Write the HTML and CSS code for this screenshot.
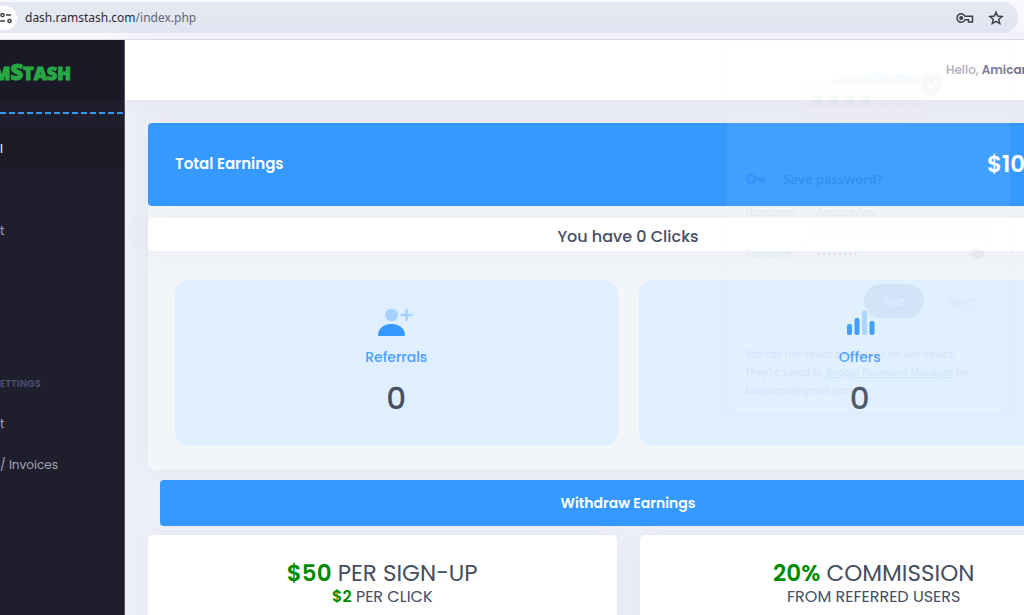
FILE: index.html
```html
<!DOCTYPE html>
<html lang="en">
<head>
<meta charset="utf-8">
<title>RamStash</title>
<link rel="stylesheet" href="styles.css">
</head>
<body>
<header class="browser">
  <div class="omnibox">
    <button class="site-info" aria-label="Site information">
      <svg width="14" height="14" viewBox="0 0 14 14" fill="none" stroke="#3c4043" stroke-width="1.5"><circle cx="2.500" cy="4" r="1.6"/><path d="M6 4h5M0 10h5"/><circle cx="9.500" cy="10" r="1.6"/></svg>
    </button>
    <div class="url">dash.ramstash.com<span class="path">/index.php</span></div>
    <button class="tool" aria-label="Passwords">
      <svg width="18" height="12" viewBox="0 0 18 12" fill="none" stroke="#3f4248" stroke-width="1.5"><path d="M9 4.2A4.200 4.200 0 1 0 9 7.800H12.500V10H16.500V4.200Z"/><circle cx="5.2" cy="6" r="1.3" fill="#3f4248"/></svg>
    </button>
    <button class="tool" aria-label="Bookmark">
      <svg width="16" height="16" viewBox="0 0 16 16" fill="none" stroke="#3f4248" stroke-width="1.5"><path d="M8 2.200l1.700 3.900 4.300.4-3.200 2.800.9 4.200L8 11.400l-3.700 2.100.9-4.200L2 6.500l4.300-.4z"/></svg>
    </button>
  </div>
</header>

<div class="app">
  <aside class="sidebar">
    <div class="brand"><span class="logo"><span class="logo-m">M</span><span class="logo-s">S</span>TASH</span></div>
    <div class="divider"></div>
    <nav class="menu">
      <a class="item active" href="#">l</a>
      <a class="item" href="#" aria-label="Menu entry"></a>
      <a class="item" href="#">t</a>
      <a class="item" href="#" aria-label="Menu entry"></a>
      <a class="item" href="#" aria-label="Menu entry"></a>
      <h4 class="section">ETTINGS</h4>
      <a class="item" href="#">t</a>
      <a class="item" href="#">/ Invoices</a>
    </nav>
  </aside>

  <div class="page">
    <div class="topbar"><div class="greeting">Hello, <b>Amicar</b></div></div>
    <main class="content">
      <section class="panel">
        <div class="earnings"><h3>Total Earnings</h3><span class="amount">$10</span></div>
        <div class="clicks">You have 0 Clicks</div>
        <div class="tiles">
          <div class="tile">
            <svg width="38" height="30" viewBox="0 0 38 30"><circle cx="14.500" cy="7" r="6.3" fill="#a6d2ff"/><path d="M29.500 2v10M24.500 7h10" stroke="#a6d2ff" stroke-width="2.600" stroke-linecap="round"/><path d="M1 27C1.500 20 6.500 16 14.500 16s13 4 13.500 11q0 1-1 1H2q-1 0-1-1z" fill="#3699ff"/></svg>
            <a href="#">Referrals</a>
            <strong>0</strong>
          </div>
          <div class="tile">
            <svg width="36" height="30" viewBox="0 0 36 30"><rect x="5" y="16" width="5" height="11" rx="2" fill="#3699ff"/><rect x="12.500" y="10" width="5" height="17" rx="2" fill="#3699ff"/><rect x="20" y="2.500" width="5" height="24.500" rx="2" fill="#a6d2ff"/><rect x="27.500" y="13" width="5" height="14" rx="2" fill="#3699ff"/></svg>
            <a href="#">Offers</a>
            <strong>0</strong>
          </div>
        </div>
      </section>
      <button class="withdraw">Withdraw Earnings</button>
      <div class="rates">
        <section class="rate"><h2><b>$50</b> PER SIGN-UP</h2><p><b>$2</b> PER CLICK</p></section>
        <section class="rate"><h2><b>20%</b> COMMISSION</h2><p>FROM REFERRED USERS</p></section>
      </div>
    </main>
  </div>
</div>

<form class="popup">
  <svg class="art" width="283" height="100" viewBox="0 0 283 100"><path d="M102 37q18-10 32-4 14-12 28-2 20-9 38 6z" fill="#9ec3f5"/><path d="M74 37h128v32q-58 24-112 0H74z" fill="#fcecf3"/><g fill="#8ba3c8"><circle cx="90" cy="54" r="6"/><circle cx="106" cy="54" r="6"/><circle cx="122" cy="54" r="6"/><circle cx="138" cy="54" r="6"/></g><g fill="none" stroke="#d6b5ca" stroke-width="2"><circle cx="154" cy="54" r="5"/><circle cx="170" cy="54" r="5"/><circle cx="186" cy="54" r="5"/></g><path d="M205 26l10 4v8q0 9-10 13-10-4-10-13v-8z" fill="#7d9dbb"/><path d="M201 38l3 3 6-6" stroke="#fff" stroke-width="2" fill="none"/></svg>
  <h2 class="popup-title"><svg width="22" height="12" viewBox="0 0 22 12" fill="none" stroke="#174ea6" stroke-width="3"><circle cx="6" cy="6" r="4"/><path d="M10 6h11M17 6v4"/></svg>Save password?</h2>
  <div class="field"><label for="user">Username</label><input id="user" type="text" value="Amicareview"></div>
  <div class="field"><label for="pass">Password</label><div class="secret"><input id="pass" type="password" value="password"><svg width="14" height="12" viewBox="0 0 14 12" fill="none" stroke="#222" stroke-width="1.500"><path d="M1 6q6-9 12 0-6 9-12 0z"/><circle cx="7" cy="6" r="2"/></svg></div></div>
  <div class="actions"><button type="button" class="save">Save</button><button type="button" class="never">Never</button></div>
  <p class="note">You can use saved passwords on any device. They’re saved to <a href="#">Google Password Manager</a> for kacounow@gmail.com</p>
</form>
</body>
</html>
```

FILE: styles.css
```css
* { box-sizing: border-box; }
body {
  margin: 0;
  height: 100vh;
  overflow: hidden;
  position: relative;
  display: flex;
  flex-direction: column;
  font-family: Poppins, Inter, sans-serif;
  color: #464e5f;
  background: #eef0f8;
}
h2, h3, h4, p { margin: 0; font-weight: 500; }
button { border: 0; padding: 0; background: none; font: inherit; color: inherit; }
a { color: inherit; text-decoration: none; }
svg { display: block; }

.browser { background: #f8f8ff; border-bottom: 1px solid #dfe1e9; padding: 2px 6px 6px 0; }
.omnibox {
  display: flex;
  align-items: center;
  height: 31px;
  padding-right: 14px;
  background: #e5e7f3;
  border-radius: 0 16px 16px 0;
}
.site-info {
  width: 17px;
  height: 24px;
  display: flex;
  align-items: center;
  border-radius: 0 12px 12px 0;
  background: #fff;
}
.url { flex: 1; margin-left: 8px; font: 12px "Noto Sans", sans-serif; color: #2b2d33; }
.path { color: #64676f; }
.tool { margin-left: 14px; }

.app { flex: 1; display: flex; min-height: 0; margin-right: -108px; }
.sidebar { width: 125px; flex: none; overflow: hidden; background: #1f1e2d; border-right: 1px solid #55545f; }
.brand { height: 60px; display: flex; align-items: center; padding-top: 4px; background: #1a1a26; }
.logo { margin-left: -7px; font: 800 18px/24px "Open Sans", sans-serif; color: #27a844; -webkit-text-stroke: 1px #27a844; white-space: nowrap; }
.logo-s { font-size: 22px; }
.divider {
  height: 2px;
  margin: 12px 0 14px;
  background: repeating-linear-gradient(90deg, #3699ff 0 6px, transparent 6px 9px);
}
.menu { display: flex; flex-direction: column; font-size: 12px; color: #a2a3b7; }
.item { height: 41px; display: flex; align-items: center; }
.item.active { background: #1b1b27; color: #fff; }
.section { height: 50px; padding-top: 43px; margin-bottom: 20px; font-size: 10px; line-height: 16px; font-weight: 600; color: #4c4e6f; }

.page { flex: 1; min-width: 0; }
.topbar { height: 60px; display: flex; align-items: center; justify-content: flex-end; padding-right: 24px; background: #fff; box-shadow: 0 0 30px rgba(82, 63, 105, .08); }
.greeting { min-width: 162px; font-size: 12px; font-weight: 500; color: #a9a8b9; }
.greeting b { font-weight: 600; color: #74738a; }
.content { padding: 23px 24px 0 23px; }
.panel { border-radius: 5px; background: #f2f6f9; box-shadow: 0 0 30px rgba(82, 63, 105, .05); }
.earnings { height: 83px; padding: 0 27px 2px; display: flex; align-items: center; justify-content: space-between; border-radius: 4px; background: #3699ff; color: #fff; }
.earnings h3 { font-size: 15px; font-weight: 600; }
.amount { min-width: 94px; font-size: 23px; font-weight: 600; }
.clicks { margin-top: 12px; height: 33px; padding-top: 3px; border-radius: 5px; background: #fff; box-shadow: 0 0 30px rgba(82, 63, 105, .05); text-align: center; font-size: 16px; line-height: 32px; font-weight: 500; }
.tiles { display: grid; grid-template-columns: 1fr 1fr; gap: 21px; padding: 29px 27px 24px; }
.tile { display: flex; flex-direction: column; align-items: center; height: 166px; padding-top: 28px; border-radius: 14px; background: #e0efff; }
.tile a { margin-top: 8px; font-size: 14px; line-height: 22px; font-weight: 500; color: #4a9fff; }
.tile strong { margin-top: 10px; font-size: 31px; line-height: 40px; font-weight: 500; }
.withdraw { display: block; width: calc(100% - 24px); height: 46px; margin: 10px 12px 9px; border-radius: 4px; background: #3699ff; color: #fff; font-size: 14px; font-weight: 600; }
.rates { display: grid; grid-template-columns: 1fr 1fr; gap: 23px; }
.rate { height: 120px; padding-top: 22px; border-radius: 5px; background: #fff; box-shadow: 0 0 30px rgba(82, 63, 105, .05); text-align: center; }
.rate h2 { font-size: 23px; line-height: 32px; font-weight: 400; }
.rate p { font-size: 16px; line-height: 16px; font-weight: 400; }
.rate b { font-weight: 600; color: #008a00; }

.popup {
  position: absolute;
  top: 46px;
  right: 14px;
  width: 283px;
  height: 366px;
  opacity: .06;
  border-radius: 8px;
  background: #fff;
  color: #444;
  font: 10px/18px "Noto Sans", sans-serif;
  box-shadow: 0 0 4px #aaa;
}
.popup-title { display: flex; align-items: center; gap: 16px; padding: 22px 18px 0; color: #000; font-size: 13px; line-height: 22px; font-weight: 600; }
.field { display: flex; align-items: center; height: 42px; padding: 0 18px; }
.popup-title + .field { margin-top: 1px; }
.field label { width: 62px; }
.field input { flex: 1; min-width: 0; width: 100%; height: 30px; padding: 0 8px; border: 1px solid #ccc; border-radius: 4px; background: #fff; color: #444; font: inherit; }
.field input[type="password"] { font-size: 14px; }
.secret { flex: 1; position: relative; }
.secret svg { position: absolute; right: 8px; top: 9px; }
.actions { display: flex; justify-content: flex-end; gap: 8px; padding: 9px 18px 0; }
.actions button { height: 34px; border-radius: 17px; width: 60px; }
.actions .save { background: #0b3f8a; color: #fff; }
.actions .never { background: #eaf1ff; }
.note { padding: 27px 18px 0; }
.note a { text-decoration: underline; color: #0b57d0; }
```
